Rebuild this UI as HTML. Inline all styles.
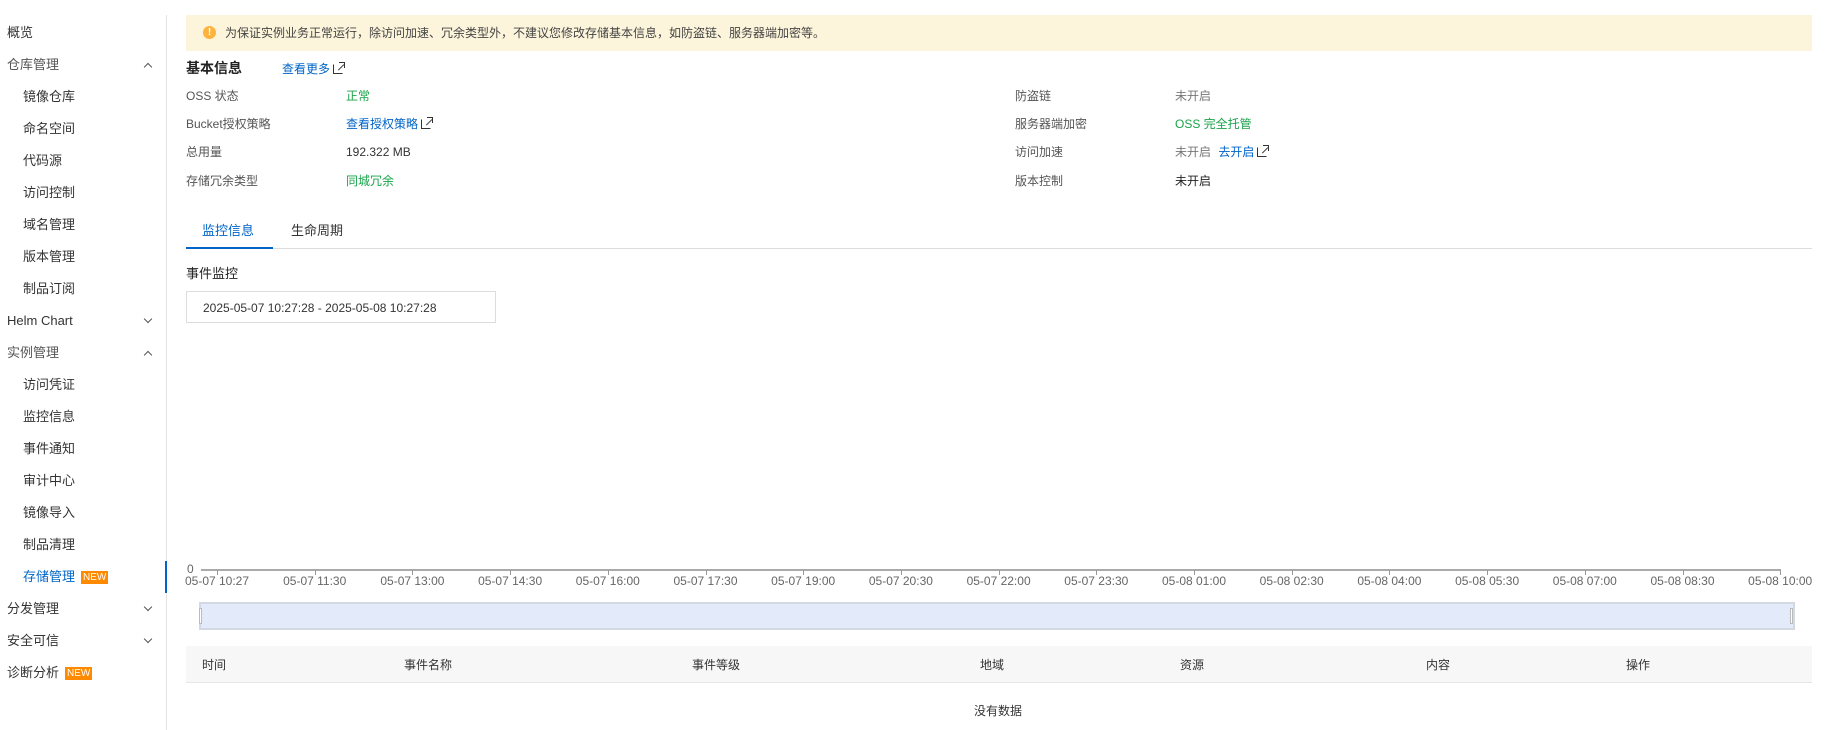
<!DOCTYPE html>
<html><head><meta charset="utf-8"><style>
*{margin:0;padding:0;box-sizing:border-box}
body{width:1840px;height:730px;background:#fff;font-family:"Liberation Sans","Noto Sans CJK SC",sans-serif;font-size:12px;color:#333;position:relative;overflow:hidden}
.a{position:absolute;white-space:nowrap;line-height:16px}
.s{font-size:13px;color:#333;transform:translateY(-8px)}
.c{transform:translateY(-8px)}
.chev{position:absolute;width:6px;height:6px;border-left:1.3px solid #555;border-top:1.3px solid #555}
.up{transform:rotate(45deg)}
.dn{transform:rotate(225deg)}
.new{display:inline-block;background:#ff8a00;color:#fff;font-size:10px;line-height:13px;padding:0 2px;margin-left:6px;vertical-align:1px}
.lab{color:#555}
.g{color:#1aa34a}
.b{color:#0064c8}
.ext{display:inline-block;width:10px;height:10px;border:1.3px solid #333;margin-left:3px;vertical-align:-1px;position:relative;border-top-color:transparent;border-right-color:transparent}
.ext:after{content:"";position:absolute;right:-3px;top:-3px;width:5px;height:5px;border-top:1.5px solid #333;border-right:1.5px solid #333}
.ext:before{content:"";position:absolute;right:-2px;top:-1px;width:8px;height:1.3px;background:#333;transform:rotate(-45deg);transform-origin:right}
.tl{position:absolute;color:#666;font-size:12px;transform:translate(-50%,0);white-space:nowrap}
.tk{position:absolute;top:570px;width:1px;height:5px;background:#999}
</style></head><body>
<div style="position:absolute;left:166px;top:15px;width:1px;height:715px;background:#e3e3e3"></div>
<div style="position:absolute;left:165px;top:561px;width:2px;height:32px;background:#0064c8"></div>

<div class="a s" style="left:7px;top:33px">概览</div>
<div class="a s" style="left:7px;top:65px;color:#555">仓库管理</div><div class="chev up" style="left:145px;top:64px"></div>
<div class="a s" style="left:23px;top:97px">镜像仓库</div>
<div class="a s" style="left:23px;top:129px">命名空间</div>
<div class="a s" style="left:23px;top:161px">代码源</div>
<div class="a s" style="left:23px;top:193px">访问控制</div>
<div class="a s" style="left:23px;top:225px">域名管理</div>
<div class="a s" style="left:23px;top:257px">版本管理</div>
<div class="a s" style="left:23px;top:289px">制品订阅</div>
<div class="a s" style="left:7px;top:321px">Helm Chart</div><div class="chev dn" style="left:145px;top:316px"></div>
<div class="a s" style="left:7px;top:353px;color:#555">实例管理</div><div class="chev up" style="left:145px;top:352px"></div>
<div class="a s" style="left:23px;top:385px">访问凭证</div>
<div class="a s" style="left:23px;top:417px">监控信息</div>
<div class="a s" style="left:23px;top:449px">事件通知</div>
<div class="a s" style="left:23px;top:481px">审计中心</div>
<div class="a s" style="left:23px;top:513px">镜像导入</div>
<div class="a s" style="left:23px;top:545px">制品清理</div>
<div class="a s" style="left:23px;top:577px;color:#0064c8">存储管理<span class="new">NEW</span></div>
<div class="a s" style="left:7px;top:609px">分发管理</div><div class="chev dn" style="left:145px;top:604px"></div>
<div class="a s" style="left:7px;top:641px">安全可信</div><div class="chev dn" style="left:145px;top:636px"></div>
<div class="a s" style="left:7px;top:673px">诊断分析<span class="new">NEW</span></div>

<div style="position:absolute;left:186px;top:15px;width:1626px;height:36px;background:#fdf5db"></div>
<div style="position:absolute;left:203px;top:26px;width:13px;height:13px;border-radius:50%;background:#fdb33e;color:#fff;font-size:10px;line-height:13px;text-align:center;font-weight:bold">!</div>
<div class="a c" style="left:225px;top:33px;color:#444">为保证实例业务正常运行，除访问加速、冗余类型外，不建议您修改存储基本信息，如防盗链、服务器端加密等。</div>

<div class="a c" style="left:186px;top:68px;font-size:14px;font-weight:bold;color:#222">基本信息</div>
<div class="a c b" style="left:282px;top:69px">查看更多<span class="ext"></span></div>

<div class="a c lab" style="left:186px;top:96px">OSS 状态</div><div class="a c g" style="left:346px;top:96px">正常</div>
<div class="a c lab" style="left:186px;top:124px">Bucket授权策略</div><div class="a c b" style="left:346px;top:124px">查看授权策略<span class="ext"></span></div>
<div class="a c lab" style="left:186px;top:152px">总用量</div><div class="a c" style="left:346px;top:152px">192.322 MB</div>
<div class="a c lab" style="left:186px;top:181px">存储冗余类型</div><div class="a c g" style="left:346px;top:181px">同城冗余</div>

<div class="a c lab" style="left:1015px;top:96px">防盗链</div><div class="a c" style="left:1175px;top:96px;color:#777">未开启</div>
<div class="a c lab" style="left:1015px;top:124px">服务器端加密</div><div class="a c g" style="left:1175px;top:124px">OSS 完全托管</div>
<div class="a c lab" style="left:1015px;top:152px">访问加速</div><div class="a c" style="left:1175px;top:152px;color:#777">未开启 <span class="b" style="margin-left:4px">去开启</span><span class="ext"></span></div>
<div class="a c lab" style="left:1015px;top:181px">版本控制</div><div class="a c" style="left:1175px;top:181px;color:#222">未开启</div>

<div class="a c" style="left:202px;top:231px;font-size:13px;color:#0064c8">监控信息</div>
<div class="a c" style="left:291px;top:231px;font-size:13px;color:#333">生命周期</div>
<div style="position:absolute;left:186px;top:248px;width:1626px;height:1px;background:#ddd"></div>
<div style="position:absolute;left:186px;top:247px;width:87px;height:2px;background:#0064c8"></div>

<div class="a c" style="left:186px;top:274px;font-size:13px;color:#222">事件监控</div>
<div style="position:absolute;left:186px;top:291px;width:310px;height:32px;border:1px solid #ddd"></div>
<div class="a c" style="left:203px;top:308px">2025-05-07 10:27:28 - 2025-05-08 10:27:28</div>

<div class="a" style="left:187px;top:561px;color:#666">0</div>
<div style="position:absolute;left:201px;top:569px;width:1580px;height:2px;background:#aaa"></div>
<div id="ax"></div>
<div style="position:absolute;left:199px;top:602px;width:1596px;height:28px;background:#e3ebfa;border:2px solid #d3d9e3"></div>
<div style="position:absolute;left:199px;top:608px;width:3px;height:16px;background:#fff;border:1px solid #bbb"></div>
<div style="position:absolute;left:1790px;top:608px;width:3px;height:16px;background:#fff;border:1px solid #bbb"></div>

<div style="position:absolute;left:186px;top:646px;width:1626px;height:37px;background:#f7f7f7;border-bottom:1px solid #e5e5e5"></div>
<div class="a c" style="left:202px;top:665px">时间</div>
<div class="a c" style="left:404px;top:665px">事件名称</div>
<div class="a c" style="left:692px;top:665px">事件等级</div>
<div class="a c" style="left:980px;top:665px">地域</div>
<div class="a c" style="left:1180px;top:665px">资源</div>
<div class="a c" style="left:1426px;top:665px">内容</div>
<div class="a c" style="left:1626px;top:665px">操作</div>
<div class="a c" style="left:974px;top:711px">没有数据</div>
<script>
var L=["05-07 10:27","05-07 11:30","05-07 13:00","05-07 14:30","05-07 16:00","05-07 17:30","05-07 19:00","05-07 20:30","05-07 22:00","05-07 23:30","05-08 01:00","05-08 02:30","05-08 04:00","05-08 05:30","05-08 07:00","05-08 08:30","05-08 10:00"],h="";
for(var i=0;i<17;i++){var x=217+i*97.7;h+='<div class="tk" style="left:'+x+'px"></div><div class="tl" style="left:'+x+'px;top:574px">'+L[i]+'</div>';}
document.getElementById("ax").innerHTML=h;
</script>
</body></html>
